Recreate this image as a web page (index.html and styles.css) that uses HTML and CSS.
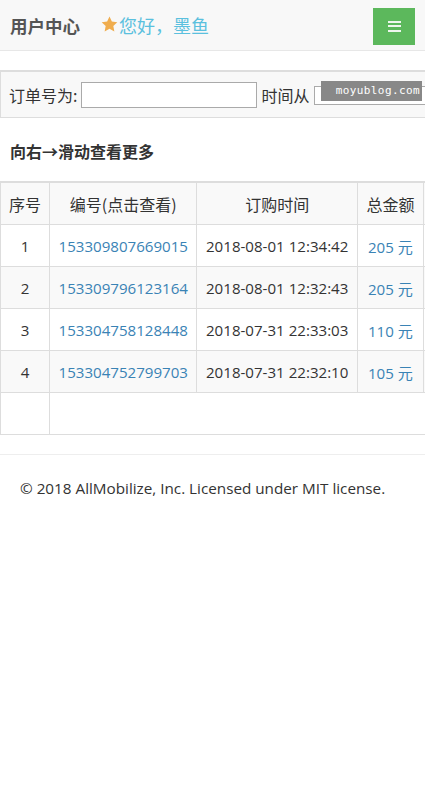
FILE: index.html
```html
<!DOCTYPE html>
<html lang="zh-CN">
<head>
    <meta charset="UTF-8">
    <meta name="viewport" content="width=device-width, initial-scale=1.0">
    <title>用户中心</title>
    <link rel="stylesheet" href="styles.css">
</head>
<body>
    <header class="topbar">
        <span class="brand">用户中心</span>
        <span class="hello">
            <svg class="star" width="17" height="16" viewBox="0 0 24 23"><path d="M12 0.8l3.4 7.2 7.8 1-5.7 5.4 1.5 7.8L12 18.4l-7 3.8 1.5-7.8L0.8 9l7.8-1z" fill="#f0ad4e"/></svg>您好，<a href="#">墨鱼</a>
        </span>
        <button class="menu-btn" aria-label="菜单">
            <span></span><span></span><span></span>
        </button>
    </header>

    <form class="search-bar">
        <label for="order-no">订单号为:</label>
        <input type="text" id="order-no" class="order-input">
        <label for="date-from">时间从</label>
        <input type="text" id="date-from" class="date-input">
        <div class="watermark">moyublog.com</div>
    </form>

    <h3 class="hint">向右→滑动查看更多</h3>

    <div class="table-wrap">
        <table class="orders">
            <thead>
                <tr>
                    <th class="c-no">序号</th>
                    <th>编号(点击查看)</th>
                    <th>订购时间</th>
                    <th>总金额</th>
                    <th class="c-more"></th>
                </tr>
            </thead>
            <tbody>
                <tr>
                    <td class="c-no">1</td>
                    <td><a href="#">153309807669015</a></td>
                    <td>2018-08-01 12:34:42</td>
                    <td><a href="#">205 元</a></td>
                    <td></td>
                </tr>
                <tr>
                    <td class="c-no">2</td>
                    <td><a href="#">153309796123164</a></td>
                    <td>2018-08-01 12:32:43</td>
                    <td><a href="#">205 元</a></td>
                    <td></td>
                </tr>
                <tr>
                    <td class="c-no">3</td>
                    <td><a href="#">153304758128448</a></td>
                    <td>2018-07-31 22:33:03</td>
                    <td><a href="#">110 元</a></td>
                    <td></td>
                </tr>
                <tr>
                    <td class="c-no">4</td>
                    <td><a href="#">153304752799703</a></td>
                    <td>2018-07-31 22:32:10</td>
                    <td><a href="#">105 元</a></td>
                    <td></td>
                </tr>
                <tr class="empty">
                    <td class="c-no"></td>
                    <td colspan="4"></td>
                </tr>
            </tbody>
        </table>
    </div>

    <footer class="footer">
        <p>© 2018 AllMobilize, Inc. Licensed under MIT license.</p>
    </footer>
</body>
</html>
```

FILE: styles.css
```css
body {
    margin: 0;
    font-family: "Open Sans", "Noto Sans CJK SC", sans-serif;
    font-size: 15px;
    color: #333;
    background: #fff;
}
a {
    color: #3a83b5;
    text-decoration: none;
}
.topbar {
    height: 50px;
    background: #f8f8f8;
    border-bottom: 1px solid #e7e7e7;
    display: flex;
    align-items: center;
    padding: 0 10px;
}
.brand {
    font-size: 17.5px;
    font-weight: bold;
    color: #555;
    margin-right: 21px;
}
.hello {
    font-size: 18px;
    color: #5bc0de;
    display: flex;
    align-items: center;
}
.hello a {
    color: #5bc0de;
}
.star {
    margin-right: 1px;
    margin-top: -2px;
}
.menu-btn {
    margin-left: auto;
    width: 42px;
    height: 37px;
    background: #5cb85c;
    border: none;
    border-radius: 0;
    display: flex;
    flex-direction: column;
    justify-content: center;
    align-items: center;
    gap: 2.5px;
    padding: 0;
    margin-top: 2px;
}
.menu-btn span {
    display: block;
    width: 13px;
    height: 2px;
    background: #eef6ee;
}
.search-bar {
    position: relative;
    margin: 19px 0 0;
    height: 45px;
    background: #f8f8f8;
    border: 1px solid #ddd;
    border-top-width: 2px;
    border-right: none;
    display: flex;
    align-items: center;
    padding-left: 8px;
    font-size: 16px;
    white-space: nowrap;
    overflow: hidden;
    font-family: "Noto Sans CJK SC", sans-serif;
}
.search-bar label {
    margin-right: 3px;
}
.order-input {
    width: 174px;
    height: 24px;
    border: 1px solid #aaa;
    padding: 0;
    margin: 1px 4px 0 1px;
    background: #fff;
}
.date-input {
    width: 140px;
    height: 17px;
    border: 1px solid #aaa;
    padding: 0;
    margin: 2px 0 0 2px;
    flex-shrink: 0;
    background: #fff;
}
.watermark {
    position: absolute;
    left: 320px;
    top: 9px;
    width: 101px;
    height: 20px;
    background: #888;
    color: #fff;
    font-family: "DejaVu Sans Mono", monospace;
    font-size: 11px;
    letter-spacing: 0.4px;
    line-height: 20px;
    text-align: right;
    padding-right: 2px;
    box-sizing: border-box;
}
.hint {
    margin: 22px 0 0 10px;
    font-size: 16px;
    font-weight: bold;
    font-family: "Noto Sans CJK SC", sans-serif;
    line-height: 22px;
}
.table-wrap {
    margin-top: 19px;
    overflow-x: auto;
    scrollbar-width: none;
}
.orders {
    border-collapse: collapse;
    white-space: nowrap;
}
.orders th,
.orders td {
    border: 1px solid #ddd;
    padding: 0 8.5px;
    height: 41px;
    text-align: center;
    font-weight: normal;
    font-size: 15.1px;
}
.orders th {
    font-size: 16px;
    font-family: "Noto Sans CJK SC", sans-serif;
    background: #f9f9f9;
    border-top-width: 2px;
}
.orders .c-no {
    width: 30px;
    padding: 0 8px;
}
.orders .c-more {
    width: 80px;
}
.orders tbody tr:nth-child(even) {
    background: #f9f9f9;
}
.orders td a {
    color: #3a83b5;
}
.footer {
    margin-top: 19px;
    border-top: 1px solid #eee;
    padding: 23px 20px;
}
.footer p {
    margin: 0;
    font-size: 15.25px;
}
```
